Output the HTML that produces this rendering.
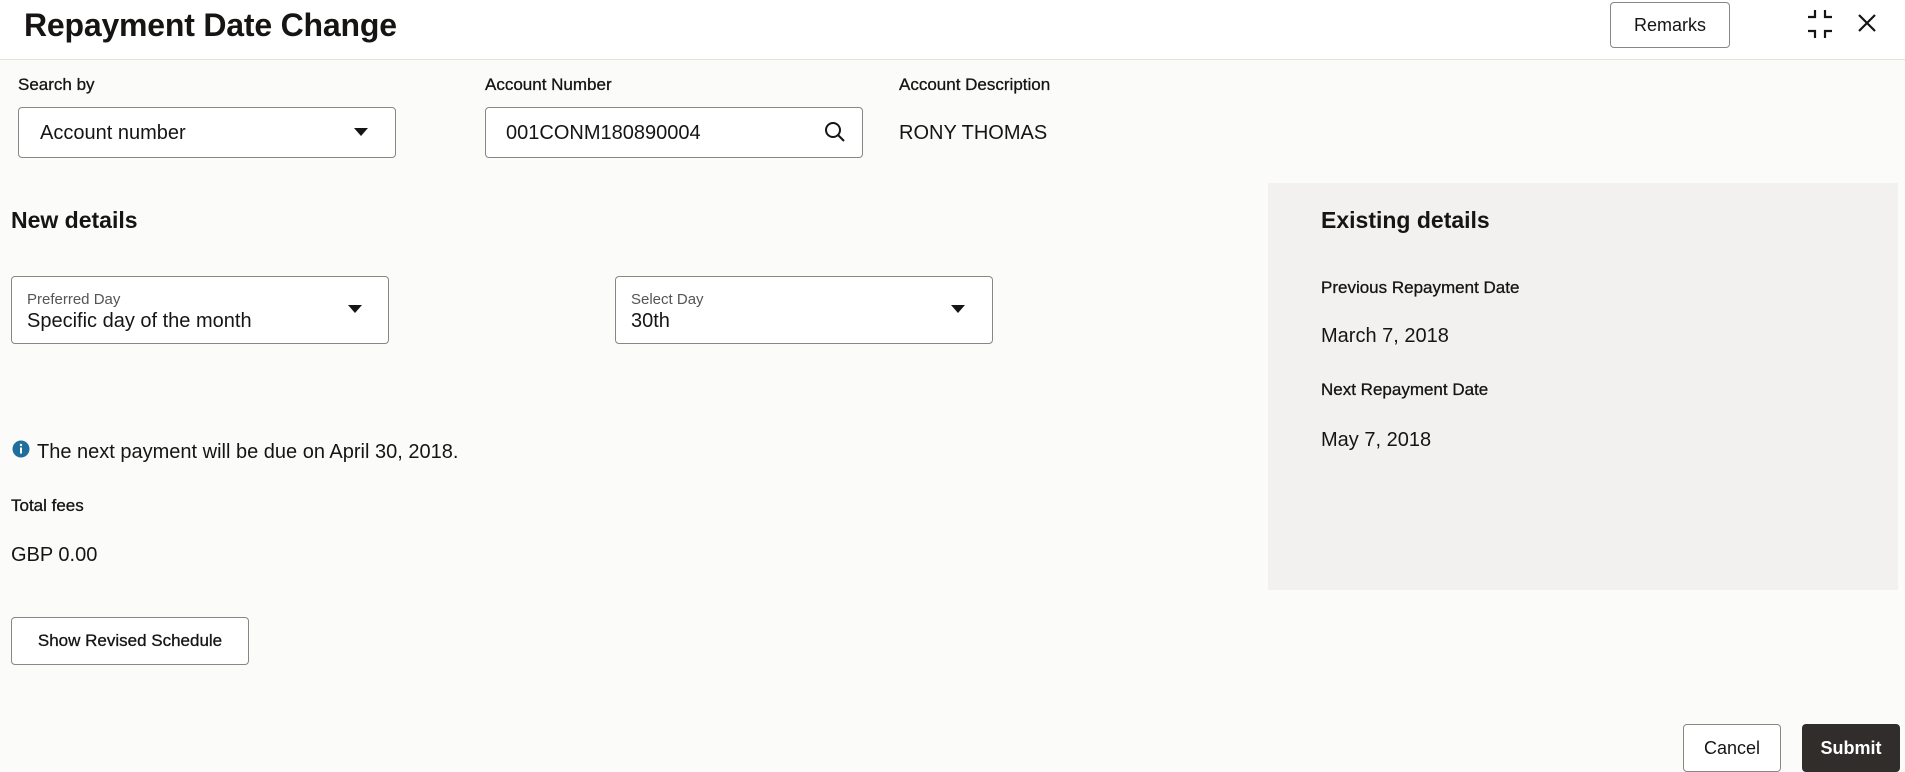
<!DOCTYPE html>
<html><head><meta charset="utf-8"><style>
*{box-sizing:border-box;margin:0;padding:0}
body{width:1905px;height:772px;overflow:hidden;background:#fbfbfa;font-family:"Liberation Sans",sans-serif;color:#161513;position:relative}
.a{position:absolute;white-space:nowrap}
.hdr{position:absolute;left:0;top:0;width:1905px;height:60px;background:#fff;border-bottom:1px solid #e4e3e0}
.lbl{font-size:17px;color:#161513;-webkit-text-stroke:0.3px #161513}
.box{position:absolute;border:1px solid #8a8783;border-radius:4px;background:#fff}
.val{font-size:20px}
.arrow{position:absolute;width:0;height:0;border-left:7px solid transparent;border-right:7px solid transparent;border-top:8px solid #161513}
.btn{position:absolute;border:1px solid #8a8783;border-radius:4px;background:#fff;font-size:17px;display:flex;align-items:center;justify-content:center}
</style></head><body>
<div class="hdr"></div>
<div class="a" style="left:24px;top:7px;font-size:32px;font-weight:bold;letter-spacing:-0.2px">Repayment Date Change</div>
<div class="btn" style="left:1610px;top:2px;width:120px;height:46px;font-size:18px">Remarks</div>
<svg class="a" style="left:1806px;top:9px" width="28" height="30" viewBox="0 0 28 30" fill="none" stroke="#161513" stroke-width="2.2"><path d="M9 1v7H2M19 1v7h7M2 22h7v7M26 22h-7v7"/></svg>
<svg class="a" style="left:1857px;top:13px" width="20" height="20" viewBox="0 0 20 20" stroke="#161513" stroke-width="2.2"><path d="M2 2l16 16M18 2L2 18"/></svg>

<div class="a lbl" style="left:18px;top:75px">Search by</div>
<div class="box" style="left:18px;top:107px;width:378px;height:51px"></div>
<div class="a val" style="left:40px;top:122px">Account number</div>
<div class="arrow" style="left:354px;top:128px"></div>

<div class="a lbl" style="left:485px;top:75px">Account Number</div>
<div class="box" style="left:485px;top:107px;width:378px;height:51px"></div>
<div class="a val" style="left:506px;top:122px">001CONM180890004</div>
<svg class="a" style="left:823px;top:120px" width="24" height="24" viewBox="0 0 24 24" fill="none" stroke="#161513" stroke-width="2"><circle cx="10" cy="10" r="7"/><path d="M15 15l6 6"/></svg>

<div class="a lbl" style="left:899px;top:75px">Account Description</div>
<div class="a val" style="left:899px;top:122px">RONY THOMAS</div>

<div class="a" style="left:11px;top:207px;font-size:23px;font-weight:bold">New details</div>

<div class="box" style="left:11px;top:276px;width:378px;height:68px"></div>
<div class="a" style="left:27px;top:291px;font-size:15px;color:#555">Preferred Day</div>
<div class="a val" style="left:27px;top:310px">Specific day of the month</div>
<div class="arrow" style="left:348px;top:305px"></div>

<div class="box" style="left:615px;top:276px;width:378px;height:68px"></div>
<div class="a" style="left:631px;top:291px;font-size:15px;color:#555">Select Day</div>
<div class="a val" style="left:631px;top:310px">30th</div>
<div class="arrow" style="left:951px;top:305px"></div>

<svg class="a" style="left:12px;top:440px" width="18" height="18" viewBox="0 0 18 18"><circle cx="9" cy="9" r="8.5" fill="#1f6e9c"/><rect x="8" y="7.5" width="2" height="6" fill="#fff"/><circle cx="9" cy="5" r="1.2" fill="#fff"/></svg>
<div class="a val" style="left:37px;top:441px">The next payment will be due on April 30, 2018.</div>

<div class="a lbl" style="left:11px;top:496px">Total fees</div>
<div class="a val" style="left:11px;top:544px">GBP 0.00</div>

<div class="btn" style="left:11px;top:617px;width:238px;height:48px;-webkit-text-stroke:0.3px #161513">Show Revised Schedule</div>

<div class="a" style="left:1268px;top:183px;width:630px;height:407px;background:#f2f1ef"></div>
<div class="a" style="left:1321px;top:207px;font-size:23px;font-weight:bold">Existing details</div>
<div class="a lbl" style="left:1321px;top:278px">Previous Repayment Date</div>
<div class="a val" style="left:1321px;top:325px">March 7, 2018</div>
<div class="a lbl" style="left:1321px;top:380px">Next Repayment Date</div>
<div class="a val" style="left:1321px;top:429px">May 7, 2018</div>

<div class="btn" style="left:1683px;top:724px;width:98px;height:48px;font-size:18px">Cancel</div>
<div class="btn" style="left:1802px;top:724px;width:98px;height:48px;font-size:18px;background:#312d2a;color:#fff;border-color:#312d2a;font-weight:bold">Submit</div>
</body></html>
